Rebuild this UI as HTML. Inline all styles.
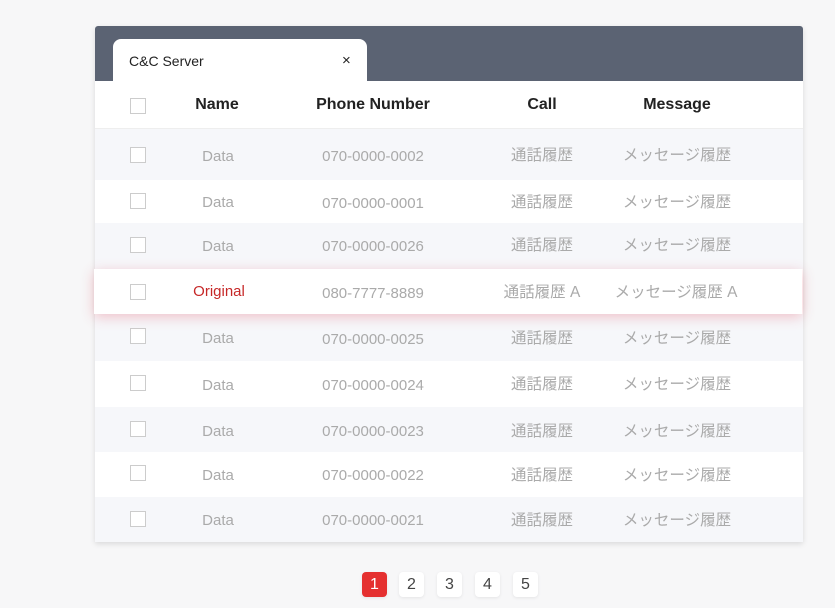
<!DOCTYPE html><html><head><style>
body{margin:0;width:835px;height:608px;background:#f7f7f8;font-family:"Liberation Sans","Noto Sans CJK JP",sans-serif;position:relative;overflow:hidden}
.card{position:absolute;left:95px;top:26px;width:708px;height:516px;background:#fff;box-shadow:0 2px 6px rgba(0,0,0,.12);border-radius:3px 3px 0 0}
.bar{position:absolute;left:0;top:0;width:708px;height:55px;background:#5b6373;border-radius:3px 3px 0 0}
.tab{position:absolute;left:18px;top:13px;width:254px;height:42px;background:#fff;border-radius:8px 8px 0 0;font-size:14px;color:#222}
.row{position:absolute;left:0;width:708px;font-size:15px;color:#aaa}
.row span{position:absolute;transform:translateX(-50%);white-space:nowrap}
.row span.p{margin-top:1px}
.row span.j{font-size:15.5px;margin-top:-2px}
.cb{position:absolute;left:35px;width:14px;height:14px;border:1px solid #ccc;background:#fff}
.hd{font-size:16px;font-weight:bold;color:#222}
.pg{position:absolute;top:572px;width:25px;height:25px;border-radius:4px;background:#fff;text-align:center;line-height:25px;font-size:16px;color:#444;box-shadow:0 1px 3px rgba(0,0,0,.08)}
</style></head><body>
<div class="card">
<div class="bar"></div>
<div class="tab"><span style="position:absolute;left:16px;top:14px">C&amp;C Server</span><span style="position:absolute;left:229px;top:13px;font-size:15px">×</span></div>
<div class="row hd" style="top:55px;height:47px;border-bottom:1px solid #eee;font-size:16px;color:#222"><div class="cb" style="top:17px"></div><span style="left:122px;top:15px">Name</span><span style="left:278px;top:15px">Phone Number</span><span style="left:447px;top:15px">Call</span><span style="left:582px;top:15px">Message</span></div>
</div>
<div style="position:absolute;left:95px;top:129px;width:708px">
<div class="row" style="top:0;height:51px;background:#f6f7fa"><div class="cb" style="top:18px"></div><span style="left:123px;top:19px">Data</span><span class="p" style="left:278px;top:18px">070-0000-0002</span><span class="j" style="left:447px;top:16px">通話履歴</span><span class="j" style="left:582px;top:16px">メッセージ履歴</span></div>
<div class="row" style="top:51px;height:43px;background:#fff"><div class="cb" style="top:13px"></div><span style="left:123px;top:14px">Data</span><span class="p" style="left:278px;top:14px">070-0000-0001</span><span class="j" style="left:447px;top:12px">通話履歴</span><span class="j" style="left:582px;top:12px">メッセージ履歴</span></div>
<div class="row" style="top:94px;height:46px;background:#f6f7fa"><div class="cb" style="top:14px"></div><span style="left:123px;top:15px">Data</span><span class="p" style="left:278px;top:14px">070-0000-0026</span><span class="j" style="left:447px;top:12px">通話履歴</span><span class="j" style="left:582px;top:12px">メッセージ履歴</span></div>
<div class="row" style="top:185px;height:47px;background:#f6f7fa"><div class="cb" style="top:14px"></div><span style="left:123px;top:16px">Data</span><span class="p" style="left:278px;top:16px">070-0000-0025</span><span class="j" style="left:447px;top:14px">通話履歴</span><span class="j" style="left:582px;top:14px">メッセージ履歴</span></div>
<div class="row" style="top:232px;height:46px;background:#fff"><div class="cb" style="top:14px"></div><span style="left:123px;top:16px">Data</span><span class="p" style="left:278px;top:15px">070-0000-0024</span><span class="j" style="left:447px;top:13px">通話履歴</span><span class="j" style="left:582px;top:13px">メッセージ履歴</span></div>
<div class="row" style="top:278px;height:45px;background:#f6f7fa"><div class="cb" style="top:14px"></div><span style="left:123px;top:16px">Data</span><span class="p" style="left:278px;top:15px">070-0000-0023</span><span class="j" style="left:447px;top:14px">通話履歴</span><span class="j" style="left:582px;top:14px">メッセージ履歴</span></div>
<div class="row" style="top:323px;height:45px;background:#fff"><div class="cb" style="top:13px"></div><span style="left:123px;top:15px">Data</span><span class="p" style="left:278px;top:14px">070-0000-0022</span><span class="j" style="left:447px;top:13px">通話履歴</span><span class="j" style="left:582px;top:13px">メッセージ履歴</span></div>
<div class="row" style="top:368px;height:45px;background:#f6f7fa"><div class="cb" style="top:14px"></div><span style="left:123px;top:15px">Data</span><span class="p" style="left:278px;top:14px">070-0000-0021</span><span class="j" style="left:447px;top:13px">通話履歴</span><span class="j" style="left:582px;top:13px">メッセージ履歴</span></div>
</div>
<div class="row" style="left:94px;top:269px;width:708px;height:45px;background:#fff;box-shadow:0 3px 12px rgba(225,70,90,.3)"><div class="cb" style="left:36px;top:15px"></div><span style="left:125px;top:14px;color:#c62828">Original</span><span class="p" style="left:279px;top:15px">080-7777-8889</span><span class="j" style="left:448px;top:13px">通話履歴 A</span><span class="j" style="left:582px;top:13px">メッセージ履歴 A</span></div>
<div class="pg" style="left:362px;background:#e53030;color:#fff">1</div>
<div class="pg" style="left:399px">2</div>
<div class="pg" style="left:437px">3</div>
<div class="pg" style="left:475px">4</div>
<div class="pg" style="left:513px">5</div>
</body></html>
